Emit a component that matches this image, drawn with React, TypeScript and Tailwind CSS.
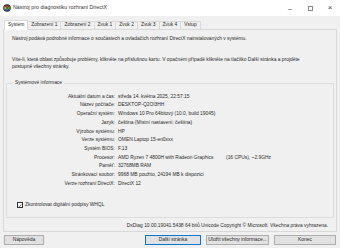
import React from "react";

const rows: [string, React.ReactNode][] = [
  ["Aktuální datum a čas:", "středa 14. května 2025, 22:57:15"],
  ["Název počítače:", "DESKTOP-Q2OI3HH"],
  ["Operační systém:", "Windows 10 Pro 64bitový (10.0, build 19045)"],
  ["Jazyk:", "čeština (Místní nastavení: čeština)"],
  ["Výrobce systému:", "HP"],
  ["Verze systému:", "OMEN Laptop 15-en0xxx"],
  ["Systém BIOS:", "F.13"],
  [
    "Procesor:",
    <span className="flex">
      <span className="w-[108px]">AMD Ryzen 7 4800H with Radeon Graphics</span>
      <span>(16 CPUs), ~2.9GHz</span>
    </span>,
  ],
  ["Paměť:", "32768MB RAM"],
  ["Stránkovací soubor:", "9968 MB použito, 24194 MB k dispozici"],
  ["Verze rozhraní DirectX:", "DirectX 12"],
];

const tabs = ["Systém", "Zobrazení 1", "Zobrazení 2", "Zvuk 1", "Zvuk 2", "Zvuk 3", "Zvuk 4", "Vstup"];

function DxIcon() {
  return (
    <svg width="8" height="8" viewBox="0 0 16 16">
      <circle cx="8" cy="8" r="7.5" fill="#1d2b3a" />
      <path d="M3 4 L8 8 L3 12 Z" fill="#e4c420" />
      <path d="M13 4 L8 8 L13 12 Z" fill="#5fae3a" />
      <path d="M4 3 L8 8 L12 3 Z" fill="#d43a2a" />
      <path d="M4 13 L8 8 L12 13 Z" fill="#2a7fd4" />
    </svg>
  );
}

export default function App() {
  return (
    <div
      className="w-[340px] h-[248px] bg-[#f0f0f0] text-[#2a2a2a] text-[4.9px] leading-none overflow-hidden flex flex-col"
      style={{ fontFamily: '"Liberation Sans", Arial, sans-serif' }}
    >
      <div className="h-[16px] bg-white flex items-center pl-[3px]">
        <DxIcon />
        <span className="ml-[2px] text-[5.3px] text-[#333]">Nástroj pro diagnostiku rozhraní DirectX</span>
        <div className="ml-auto flex items-center text-[#444]">
          <span className="w-[20px] text-center text-[7px]">–</span>
          <span className="w-[20px] flex justify-center">
            <span className="w-[5px] h-[5px] border border-[#888]" />
          </span>
          <span className="w-[20px] text-center text-[8px] font-light">×</span>
        </div>
      </div>

      <div className="flex items-end pl-[4px] mt-[3px] h-[10px]">
        {tabs.map((t, i) => (
          <span
            key={t}
            className={
              i === 0
                ? "h-[10px] px-[3px] flex items-center bg-white border border-b-0 border-[#d9d9d9] relative top-[1px]"
                : "h-[8px] px-[3px] flex items-center border border-b-0 border-l-0 border-[#d9d9d9] bg-[#f0f0f0]"
            }
          >
            {t}
          </span>
        ))}
      </div>

      <div className="mx-[3px] h-[203px] border border-[#d9d9d9] bg-[#f0f0f0] flex flex-col px-[2px]">
        <p className="mt-[7px] pl-[6px]">
          Nástroj podává podrobné informace o součástech a ovladačích rozhraní DirectX nainstalovaných v systému.
        </p>
        <p className="mt-[14px] pl-[6px] pr-[24px] leading-[7px]">
          Víte-li, která oblast způsobuje problémy, klikněte na příslušnou kartu. V opačném případě klikněte na tlačítko Další stránka a projděte postupně všechny stránky.
        </p>

        <div className="mt-[13px] h-[135px] border border-[#dcdcdc] relative flex flex-col">
          <span className="absolute -top-[3px] left-[6px] px-[2px] bg-[#f0f0f0]">Systémové informace</span>
          <div className="mt-[9px] flex flex-col">
            {rows.map(([k, v]) => (
              <div key={k} className="flex h-[8.7px] items-center">
                <span className="w-[108px] text-right">{k}</span>
                <span className="ml-[3px]">{v}</span>
              </div>
            ))}
          </div>
          <label className="mt-[14px] ml-[10px] flex items-center gap-[2px]">
            <span className="w-[6px] h-[6px] border border-[#333] bg-white flex items-center justify-center">
              <svg width="5" height="5" viewBox="0 0 10 10">
                <path d="M1.5 5.5 L4 8 L8.5 2" stroke="#222" strokeWidth="1.4" fill="none" />
              </svg>
            </span>
            Zkontrolovat digitální podpisy WHQL
          </label>
        </div>

        <p className="mt-[6px] text-right pr-[6px]">
          DxDiag 10.00.19041.5438 64 bitů Unicode Copyright © Microsoft. Všechna práva vyhrazena.
        </p>
      </div>

      <div className="flex items-center h-[12px] mt-[2px] px-[4px] whitespace-nowrap">
        <button className="w-[40px] h-[10px] bg-[#e1e1e1] border border-[#adadad] text-[4.9px]">Nápověda</button>
        <button className="ml-auto w-[56px] h-[10px] bg-[#e1e1e1] border border-[#0078d7] text-[4.9px]">Další stránka</button>
        <button className="ml-[5px] w-[63px] h-[10px] bg-[#e1e1e1] border border-[#adadad] text-[4.9px]">Uložit všechny informace...</button>
        <button className="ml-[5px] w-[62px] h-[10px] bg-[#e1e1e1] border border-[#adadad] text-[4.9px]">Konec</button>
      </div>
    </div>
  );
}
